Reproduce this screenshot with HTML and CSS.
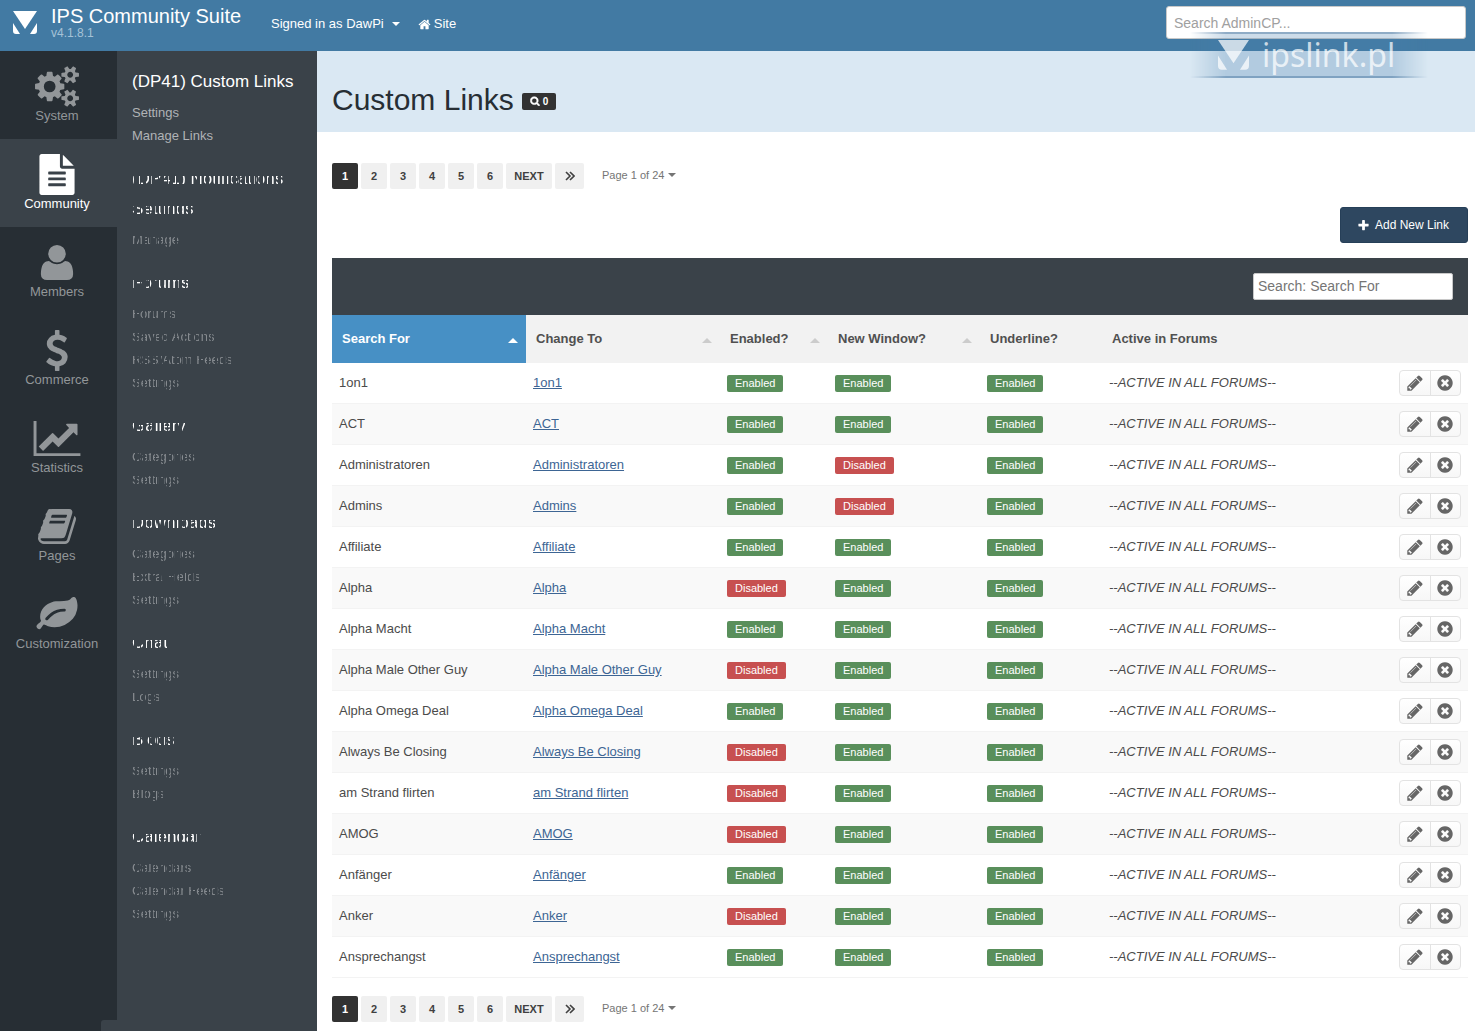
FILE: index.html
```html
<!DOCTYPE html>
<html lang="en">
<head>
<meta charset="utf-8">
<title>Custom Links - IPS Community Suite</title>
<link rel="stylesheet" href="styles.css">
</head>
<body>
<svg class="sprite" aria-hidden="true">
  <symbol id="cogs" viewBox="0 0 1920 1792"><path d="M896 896q0-106-75-181t-181-75-181 75-75 181 75 181 181 75 181-75 75-181zm768 512q0-52-38-90t-90-38-90 38-38 90q0 53 37.5 90.5t90.5 37.5 90.5-37.5 37.5-90.5zm0-1024q0-52-38-90t-90-38-90 38-38 90q0 53 37.5 90.5t90.5 37.5 90.5-37.5 37.5-90.5zm-384 421v185q0 10-7 19.5t-16 10.5l-155 24q-11 35-32 76 34 48 90 115 7 11 7 20 0 12-7 19-23 30-82.5 89.5t-78.5 59.5q-11 0-21-7l-115-90q-37 19-77 31-11 108-23 155-7 24-30 24h-186q-11 0-20-7.5t-10-17.5l-23-153q-34-10-75-31l-118 89q-7 7-20 7-11 0-21-8-144-133-144-160 0-9 7-19 10-14 41-53t47-61q-23-44-35-82l-152-24q-10-1-17-9.5t-7-19.5v-185q0-10 7-19.5t16-10.5l155-24q11-35 32-76-34-48-90-115-7-11-7-20 0-12 7-20 22-30 82-89t79-59q11 0 21 7l115 90q34-18 77-32 11-108 23-154 7-24 30-24h186q11 0 20 7.5t10 17.5l23 153q34 10 75 31l118-89q8-7 20-7 11 0 21 8 144 133 144 160 0 8-7 19-12 16-42 54t-45 60q23 48 34 82l152 23q10 2 17 10.5t7 19.5zm640 533v140q0 16-149 31-12 27-30 52 51 113 51 138 0 4-4 7-122 71-124 71-8 0-46-47t-52-68q-20 2-30 2t-30-2q-14 21-52 68t-46 47q-2 0-124-71-4-3-4-7 0-25 51-138-18-25-30-52-149-15-149-31v-140q0-16 149-31 13-29 30-52-51-113-51-138 0-4 4-7 4-2 35-20t59-34 30-16q8 0 46 46.5t52 67.5q20-2 30-2t30 2q51-71 92-112l6-2q4 0 124 70 4 3 4 7 0 25-51 138 17 23 30 52 149 15 149 31zm0-1024v140q0 16-149 31-12 27-30 52 51 113 51 138 0 4-4 7-122 71-124 71-8 0-46-47t-52-68q-20 2-30 2t-30-2q-14 21-52 68t-46 47q-2 0-124-71-4-3-4-7 0-25 51-138-18-25-30-52-149-15-149-31v-140q0-16 149-31 13-29 30-52-51-113-51-138 0-4 4-7 4-2 35-20t59-34 30-16q8 0 46 46.5t52 67.5q20-2 30-2t30 2q51-71 92-112l6-2q4 0 124 70 4 3 4 7 0 25-51 138 17 23 30 52 149 15 149 31z"/></symbol>
  <symbol id="file" viewBox="0 0 1792 1792"><path d="M1596 476q14 14 28 36h-472v-472q22 14 36 28zm-476 164h544v1056q0 40-28 68t-68 28h-1344q-40 0-68-28t-28-68v-1600q0-40 28-68t68-28h800v544q0 40 28 68t68 28zm160 736v-64q0-14-9-23t-23-9h-704q-14 0-23 9t-9 23v64q0 14 9 23t23 9h704q14 0 23-9t9-23zm0-256v-64q0-14-9-23t-23-9h-704q-14 0-23 9t-9 23v64q0 14 9 23t23 9h704q14 0 23-9t9-23zm0-256v-64q0-14-9-23t-23-9h-704q-14 0-23 9t-9 23v64q0 14 9 23t23 9h704q14 0 23-9t9-23z"/></symbol>
  <symbol id="user" viewBox="0 0 1408 1792"><path transform="translate(0 1536) scale(1 -1)" d="M1408 131q0-120-73-189.5t-194-69.5h-874q-121 0-194 69.5t-73 189.5q0 53 3.5 103.5t14 109t26.5 108.5t43 97.5t62 81t85.5 53.5t111.5 20q9 0 42-21.5t74.5-48t108-48t133.5-21.5t133.5 21.5t108 48t74.5 48t42 21.5q61 0 111.5-20t85.5-53.5t62-81t43-97.5t26.5-108.5t14-109t3.5-103.5zM1088 1024q0-159-112.5-271.5t-271.5-112.5t-271.5 112.5t-112.5 271.5t112.5 271.5t271.5 112.5t271.5-112.5t112.5-271.5z"/></symbol>
  <symbol id="dollar" viewBox="0 0 1024 1792"><path transform="translate(0 1536) scale(1 -1)" d="M978 351q0-153-99.5-263.5t-258.5-136.5v-175q0-14-9-23t-23-9h-135q-13 0-22.5 9.5t-9.5 22.5v175q-66 9-127.5 31t-101.5 44.5t-74 48t-46.5 37.5t-17.5 18q-17 21-2 41l103 135q7 10 23 12q15 2 24-9l2-2q113-99 243-125q37-8 74-8q81 0 142.5 43t61.5 122q0 28-15 53t-33.5 42t-58.5 37.5t-66 32t-80 32.5q-39 16-61.5 25t-61.5 26.5t-62.5 31t-56.5 35.5t-53.5 42.5t-43.5 49t-35.5 58t-21 66.5t-8.5 78q0 138 98 242t255 134v180q0 13 9.5 22.5t22.5 9.5h135q14 0 23-9t9-23v-176q57-6 110.5-23t87-33.5t63.5-37.5t39-29t15-14q17-18 5-38l-81-146q-8-15-23-16q-14-3-27 7q-3 3-14.5 12t-39 26.5t-58.5 32t-74.5 26t-85.5 11.5q-95 0-155-43t-60-111q0-26 8.5-48t29.5-41.5t39.5-33t56-31t60.5-27t70-27.5q53-20 81-31.5t76-35t75.5-42.5t62-50t53-63.5t31.5-76.5t13-94z"/></symbol>
  <symbol id="chart" viewBox="0 0 2048 1792"><path d="M2048 1536v128h-2048v-1536h128v1408h1920zm-128-1248v435q0 21-19.5 29.5t-35.5-7.5l-121-121-633 633q-10 10-23 10t-23-10l-233-233-416 416-192-192 585-585q10-10 23-10t23 10l233 233 464-464-121-121q-16-16-7.5-35.5t29.5-19.5h435q14 0 23 9t9 23z"/></symbol>
  <symbol id="book" viewBox="0 0 1792 1792"><path d="M1703 478q40 57 18 129l-275 906q-19 64-76.5 107.5t-122.5 43.5h-923q-77 0-148.5-53.5t-99.5-131.5q-24-67-2-127 0-4 3-27t4-37q1-8-3-21.5t-3-19.5q2-11 8-21t16.5-23.5 16.5-23.5q23-38 45-91.5t30-91.5q3-10 .5-30t-.5-28q3-11 17-28t17-23q21-36 42-92t25-90q1-9-2.5-32t.5-28q4-13 22-30.5t22-22.5q19-26 42.5-84.5t27.5-96.5q1-8-3-25.5t-2-26.5q2-8 9-18t18-23 17-21q8-12 16.5-30.5t15-35 16-36 19.5-32 26.5-23.5 36-11.5 47.5 5.5l-1 3q38-9 51-9h761q74 0 114 56t18 130l-274 906q-36 119-71.5 153.5t-128.5 34.5h-869q-27 0-38 15-11 16-1 43 24 70 144 70h923q29 0 56-15.5t35-41.5l300-987q7-22 5-57 38 15 59 43zm-1064 2q-4 13 2 22.5t20 9.5h608q13 0 25.5-9.5t16.5-22.5l21-64q4-13-2-22.5t-20-9.5h-608q-13 0-25.5 9.5t-16.5 22.5zm-83 256q-4 13 2 22.5t20 9.5h608q13 0 25.5-9.5t16.5-22.5l21-64q4-13-2-22.5t-20-9.5h-608q-13 0-25.5 9.5t-16.5 22.5z"/></symbol>
  <symbol id="leaf" viewBox="0 0 1792 1792"><path d="M1280 704q0-26-19-45t-45-19q-172 0-318 49.5t-259.5 134-235.5 219.5q-19 21-19 45 0 26 19 45t45 19q24 0 45-19 27-24 74-71t67-66q137-124 268.5-176t313.5-52q26 0 45-19t19-45zm512-198q0 95-20 193-46 224-184.5 383t-357.5 268q-214 108-438 108-148 0-286-47-15-5-88-42t-96-37q-16 0-39.5 32t-45 70-52.5 70-60 32q-43 0-63.5-17.5t-45.5-59.5q-2-4-6-11t-5.5-10-3-9.5-1.5-13.5q0-35 31-73.5t68-65.5 68-56 31-48q0-4-14-38t-16-44q-9-51-9-104 0-115 43.5-220t119-184.5 170.5-139 204-95.5q55-18 145-25.5t179.5-9 178.5-6 163.5-24 113.5-56.5l29.5-29.5 29.5-28 27-20 36.5-16 43.5-4.5q39 0 70.5 46t47.5 112 24 124 8 96z"/></symbol>
  <symbol id="home" viewBox="0 0 1792 1792"><path d="M1472 992v480q0 26-19 45t-45 19h-384v-384h-256v384h-384q-26 0-45-19t-19-45v-480q0-1 .5-3t.5-3l575-474 575 474q1 2 1 6zm223-69l-62 74q-8 9-21 11h-3q-13 0-21-7l-692-577-692 577q-12 8-24 7-13-2-21-11l-62-74q-8-10-7-23.5t11-21.5l719-599q32-26 76-26t76 26l244 204v-195q0-14 9-23t23-9h192q14 0 23 9t9 23v408l219 182q10 8 11 21.5t-7 23.5z"/></symbol>
  <symbol id="search" viewBox="0 0 1792 1792"><path d="M1216 832q0-185-131.5-316.5t-316.5-131.5-316.5 131.5-131.5 316.5 131.5 316.5 316.5 131.5 316.5-131.5 131.5-316.5zm512 832q0 52-38 90t-90 38q-54 0-90-38l-343-342q-179 124-399 124-143 0-273.5-55.5t-225-150-150-225-55.5-273.5 55.5-273.5 150-225 225-150 273.5-55.5 273.5 55.5 225 150 150 225 55.5 273.5q0 220-124 399l343 343q37 37 37 90z"/></symbol>
  <symbol id="plus" viewBox="0 0 1792 1792"><path d="M1600 736v192q0 40-28 68t-68 28h-416v416q0 40-28 68t-68 28h-192q-40 0-68-28t-28-68v-416h-416q-40 0-68-28t-28-68v-192q0-40 28-68t68-28h416v-416q0-40 28-68t68-28h192q40 0 68 28t28 68v416h416q40 0 68 28t28 68z"/></symbol>
  <symbol id="pencil" viewBox="0 0 1792 1792"><path d="M491 1536l91-91-235-235-91 91v107h128v128h107zm523-928q0-22-22-22-10 0-17 7l-542 542q-7 7-7 17 0 22 22 22 10 0 17-7l542-542q7-7 7-17zm-54-192l416 416-832 832h-416v-416zm683 96q0 53-37 90l-166 166-416-416 166-165q36-38 90-38 53 0 91 38l235 234q37 39 37 91z"/></symbol>
  <symbol id="remove" viewBox="0 0 1792 1792"><path d="M1277 1122q0-26-19-45l-181-181 181-181q19-19 19-45 0-27-19-46l-90-90q-19-19-46-19-26 0-45 19l-181 181-181-181q-19-19-45-19-27 0-46 19l-90 90q-19 19-19 46 0 26 19 45l181 181-181 181q-19 19-19 45 0 27 19 46l90 90q19 19 46 19 26 0 45-19l181-181 181 181q19 19 45 19 27 0 46-19l90-90q19-19 19-46zm387-226q0 209-103 385.5t-279.5 279.5-385.5 103-385.5-103-279.5-279.5-103-385.5 103-385.5 279.5-279.5 385.5-103 385.5 103 279.5 279.5 103 385.5z"/></symbol>
  <symbol id="last" viewBox="0 0 10 10"><path d="M1 1l4 4-4 4M5 1l4 4-4 4" fill="none" stroke="currentColor" stroke-width="1.6"/></symbol>
  <symbol id="logo" viewBox="0 0 24 24"><path d="M0 0h24L12 18z"/><path d="M0 12l7 11H3q-3 0-3-3zM24 12l-7 11h4q3 0 3-3z"/></symbol>
</svg>

<header class="topbar">
  <a class="brand" href="#">
    <svg class="brand-mark"><use href="#logo"/></svg>
    <span class="brand-text"><span class="brand-name">IPS Community Suite</span><span class="brand-version">v4.1.8.1</span></span>
  </a>
  <nav class="toplinks">
    <a href="#">Signed in as DawPi <i class="caret"></i></a>
    <a href="#"><svg class="home-icon"><use href="#home"/></svg>Site</a>
  </nav>
  <input class="global-search" type="search" aria-label="Search AdminCP" placeholder="Search AdminCP...">
  <div class="watermark"><svg class="watermark-mark"><use href="#logo"/></svg><span>ipslink.pl</span></div>
</header>

<div class="shell">
  <nav class="mainnav">
    <a href="#"><svg><use href="#cogs"/></svg>System</a>
    <a href="#" class="active"><svg><use href="#file"/></svg>Community</a>
    <a href="#"><svg><use href="#user"/></svg>Members</a>
    <a href="#"><svg><use href="#dollar"/></svg>Commerce</a>
    <a href="#"><svg><use href="#chart"/></svg>Statistics</a>
    <a href="#"><svg><use href="#book"/></svg>Pages</a>
    <a href="#"><svg><use href="#leaf"/></svg>Customization</a>
  </nav>

  <nav class="subnav">
    <section><h2>(DP41) Custom Links</h2><a href="#">Settings</a><a href="#">Manage Links</a></section>
    <section class="obscured"><h2>(DP41) Notifications Settings</h2><a href="#">Manage</a></section>
    <section class="obscured"><h2>Forums</h2><a href="#">Forums</a><a href="#">Saved Actions</a><a href="#">RSS/Atom Feeds</a><a href="#">Settings</a></section>
    <section class="obscured"><h2>Gallery</h2><a href="#">Categories</a><a href="#">Settings</a></section>
    <section class="obscured"><h2>Downloads</h2><a href="#">Categories</a><a href="#">Extra Fields</a><a href="#">Settings</a></section>
    <section class="obscured"><h2>Chat</h2><a href="#">Settings</a><a href="#">Logs</a></section>
    <section class="obscured"><h2>Blogs</h2><a href="#">Settings</a><a href="#">Blogs</a></section>
    <section class="obscured"><h2>Calendar</h2><a href="#">Calendars</a><a href="#">Calendar Feeds</a><a href="#">Settings</a></section>
    <div class="status-corner"></div>
  </nav>

  <main>
    <div class="page-header">
      <h1>Custom Links</h1>
      <button class="counter" type="button"><svg><use href="#search"/></svg>0</button>
    </div>
    <div class="content">
      <nav class="pager" aria-label="Pages, top">
        <a href="#" class="current">1</a><a href="#">2</a><a href="#">3</a><a href="#">4</a><a href="#">5</a><a href="#">6</a><a href="#" class="next">NEXT</a><a href="#" class="last" aria-label="Last page"><svg><use href="#last"/></svg></a>
        <button type="button">Page 1 of 24 <i class="caret"></i></button>
      </nav>
      <div class="page-actions"><button class="add" type="button"><svg><use href="#plus"/></svg>Add New Link</button></div>
      <div class="toolbar"><input type="search" aria-label="Search" placeholder="Search: Search For"></div>
      <table>
        <colgroup><col class="c-search"><col class="c-change"><col class="c-enabled"><col class="c-window"><col class="c-underline"><col><col class="c-tools"></colgroup>
        <thead><tr>
          <th class="sorted"><span>Search For<i class="sort"></i></span></th>
          <th><span>Change To<i class="sort"></i></span></th>
          <th><span>Enabled?<i class="sort"></i></span></th>
          <th><span>New Window?<i class="sort"></i></span></th>
          <th><span>Underline?</span></th>
          <th colspan="2"><span>Active in Forums</span></th>
        </tr></thead>
        <tbody>
          <tr><td>1on1</td><td><a href="#">1on1</a></td><td><b class="on">Enabled</b></td><td><b class="on">Enabled</b></td><td><b class="on">Enabled</b></td><td><em>--ACTIVE IN ALL FORUMS--</em></td><td><div class="tools"><button type="button" aria-label="Edit"><svg><use href="#pencil"/></svg></button><button type="button" aria-label="Delete"><svg><use href="#remove"/></svg></button></div></td></tr>
          <tr><td>ACT</td><td><a href="#">ACT</a></td><td><b class="on">Enabled</b></td><td><b class="on">Enabled</b></td><td><b class="on">Enabled</b></td><td><em>--ACTIVE IN ALL FORUMS--</em></td><td><div class="tools"><button type="button" aria-label="Edit"><svg><use href="#pencil"/></svg></button><button type="button" aria-label="Delete"><svg><use href="#remove"/></svg></button></div></td></tr>
          <tr><td>Administratoren</td><td><a href="#">Administratoren</a></td><td><b class="on">Enabled</b></td><td><b class="off">Disabled</b></td><td><b class="on">Enabled</b></td><td><em>--ACTIVE IN ALL FORUMS--</em></td><td><div class="tools"><button type="button" aria-label="Edit"><svg><use href="#pencil"/></svg></button><button type="button" aria-label="Delete"><svg><use href="#remove"/></svg></button></div></td></tr>
          <tr><td>Admins</td><td><a href="#">Admins</a></td><td><b class="on">Enabled</b></td><td><b class="off">Disabled</b></td><td><b class="on">Enabled</b></td><td><em>--ACTIVE IN ALL FORUMS--</em></td><td><div class="tools"><button type="button" aria-label="Edit"><svg><use href="#pencil"/></svg></button><button type="button" aria-label="Delete"><svg><use href="#remove"/></svg></button></div></td></tr>
          <tr><td>Affiliate</td><td><a href="#">Affiliate</a></td><td><b class="on">Enabled</b></td><td><b class="on">Enabled</b></td><td><b class="on">Enabled</b></td><td><em>--ACTIVE IN ALL FORUMS--</em></td><td><div class="tools"><button type="button" aria-label="Edit"><svg><use href="#pencil"/></svg></button><button type="button" aria-label="Delete"><svg><use href="#remove"/></svg></button></div></td></tr>
          <tr><td>Alpha</td><td><a href="#">Alpha</a></td><td><b class="off">Disabled</b></td><td><b class="on">Enabled</b></td><td><b class="on">Enabled</b></td><td><em>--ACTIVE IN ALL FORUMS--</em></td><td><div class="tools"><button type="button" aria-label="Edit"><svg><use href="#pencil"/></svg></button><button type="button" aria-label="Delete"><svg><use href="#remove"/></svg></button></div></td></tr>
          <tr><td>Alpha Macht</td><td><a href="#">Alpha Macht</a></td><td><b class="on">Enabled</b></td><td><b class="on">Enabled</b></td><td><b class="on">Enabled</b></td><td><em>--ACTIVE IN ALL FORUMS--</em></td><td><div class="tools"><button type="button" aria-label="Edit"><svg><use href="#pencil"/></svg></button><button type="button" aria-label="Delete"><svg><use href="#remove"/></svg></button></div></td></tr>
          <tr><td>Alpha Male Other Guy</td><td><a href="#">Alpha Male Other Guy</a></td><td><b class="off">Disabled</b></td><td><b class="on">Enabled</b></td><td><b class="on">Enabled</b></td><td><em>--ACTIVE IN ALL FORUMS--</em></td><td><div class="tools"><button type="button" aria-label="Edit"><svg><use href="#pencil"/></svg></button><button type="button" aria-label="Delete"><svg><use href="#remove"/></svg></button></div></td></tr>
          <tr><td>Alpha Omega Deal</td><td><a href="#">Alpha Omega Deal</a></td><td><b class="on">Enabled</b></td><td><b class="on">Enabled</b></td><td><b class="on">Enabled</b></td><td><em>--ACTIVE IN ALL FORUMS--</em></td><td><div class="tools"><button type="button" aria-label="Edit"><svg><use href="#pencil"/></svg></button><button type="button" aria-label="Delete"><svg><use href="#remove"/></svg></button></div></td></tr>
          <tr><td>Always Be Closing</td><td><a href="#">Always Be Closing</a></td><td><b class="off">Disabled</b></td><td><b class="on">Enabled</b></td><td><b class="on">Enabled</b></td><td><em>--ACTIVE IN ALL FORUMS--</em></td><td><div class="tools"><button type="button" aria-label="Edit"><svg><use href="#pencil"/></svg></button><button type="button" aria-label="Delete"><svg><use href="#remove"/></svg></button></div></td></tr>
          <tr><td>am Strand flirten</td><td><a href="#">am Strand flirten</a></td><td><b class="off">Disabled</b></td><td><b class="on">Enabled</b></td><td><b class="on">Enabled</b></td><td><em>--ACTIVE IN ALL FORUMS--</em></td><td><div class="tools"><button type="button" aria-label="Edit"><svg><use href="#pencil"/></svg></button><button type="button" aria-label="Delete"><svg><use href="#remove"/></svg></button></div></td></tr>
          <tr><td>AMOG</td><td><a href="#">AMOG</a></td><td><b class="off">Disabled</b></td><td><b class="on">Enabled</b></td><td><b class="on">Enabled</b></td><td><em>--ACTIVE IN ALL FORUMS--</em></td><td><div class="tools"><button type="button" aria-label="Edit"><svg><use href="#pencil"/></svg></button><button type="button" aria-label="Delete"><svg><use href="#remove"/></svg></button></div></td></tr>
          <tr><td>Anfänger</td><td><a href="#">Anfänger</a></td><td><b class="on">Enabled</b></td><td><b class="on">Enabled</b></td><td><b class="on">Enabled</b></td><td><em>--ACTIVE IN ALL FORUMS--</em></td><td><div class="tools"><button type="button" aria-label="Edit"><svg><use href="#pencil"/></svg></button><button type="button" aria-label="Delete"><svg><use href="#remove"/></svg></button></div></td></tr>
          <tr><td>Anker</td><td><a href="#">Anker</a></td><td><b class="off">Disabled</b></td><td><b class="on">Enabled</b></td><td><b class="on">Enabled</b></td><td><em>--ACTIVE IN ALL FORUMS--</em></td><td><div class="tools"><button type="button" aria-label="Edit"><svg><use href="#pencil"/></svg></button><button type="button" aria-label="Delete"><svg><use href="#remove"/></svg></button></div></td></tr>
          <tr><td>Ansprechangst</td><td><a href="#">Ansprechangst</a></td><td><b class="on">Enabled</b></td><td><b class="on">Enabled</b></td><td><b class="on">Enabled</b></td><td><em>--ACTIVE IN ALL FORUMS--</em></td><td><div class="tools"><button type="button" aria-label="Edit"><svg><use href="#pencil"/></svg></button><button type="button" aria-label="Delete"><svg><use href="#remove"/></svg></button></div></td></tr>
        </tbody>
      </table>
      <nav class="pager pager-bottom" aria-label="Pages, bottom">
        <a href="#" class="current">1</a><a href="#">2</a><a href="#">3</a><a href="#">4</a><a href="#">5</a><a href="#">6</a><a href="#" class="next">NEXT</a><a href="#" class="last" aria-label="Last page"><svg><use href="#last"/></svg></a>
        <button type="button">Page 1 of 24 <i class="caret"></i></button>
      </nav>
    </div>
  </main>
</div>
</body>
</html>
```
FILE: styles.css
```css
* { box-sizing: border-box; }
body {
  margin: 0;
  min-height: 100vh;
  display: flex;
  flex-direction: column;
  font: 13px/18px "Liberation Sans", Arial, sans-serif;
  color: #4b4b4b;
  background: #fff;
}
a { color: inherit; text-decoration: none; }
button, input { font-family: inherit; margin: 0; }
h1, h2 { margin: 0; font-weight: normal; }
svg { fill: currentColor; display: block; flex: none; }
.sprite { position: absolute; width: 0; height: 0; }

.caret {
  display: inline-block;
  border: 4px solid transparent;
  border-top-color: currentColor;
  border-bottom: 0;
}

/* top bar */
.topbar {
  position: relative;
  display: flex;
  align-items: flex-start;
  height: 51px;
  padding: 0 9px 0 13px;
  background: #427aa3;
  color: #fff;
}
.brand { display: flex; gap: 14px; width: 258px; }
.brand-mark { width: 24px; height: 24px; margin-top: 11px; }
.brand-text { display: flex; flex-direction: column; padding-top: 5px; }
.brand-name { font-size: 20px; line-height: 22px; white-space: nowrap; }
.brand-version { font-size: 12px; line-height: 12px; color: #a5c2d7; }
.toplinks { display: flex; gap: 18px; padding-top: 15px; }
.toplinks a { display: flex; align-items: center; gap: 8px; }
.toplinks a + a { gap: 3px; }
.home-icon { width: 13px; height: 13px; }
.global-search {
  width: 300px;
  height: 33px;
  margin: 6px 0 0 auto;
  padding: 0 7px;
  border: 1px solid #c8c8c8;
  border-radius: 3px;
  background: #fff;
  font-size: 14px;
}
.global-search::placeholder { color: #a0a0a0; }

/* site stamp laid over the corner of the page */
.watermark {
  position: absolute;
  z-index: 1;
  top: 32px;
  right: 47px;
  width: 238px;
  height: 46px;
  display: flex;
  align-items: center;
  gap: 13px;
  padding-left: 28px;
  font: 32px/44px "Noto Sans", sans-serif;
  color: rgba(255, 255, 255, .72);
  pointer-events: none;
}
.watermark::before {
  content: "";
  position: absolute;
  z-index: -1;
  inset: 0;
  border: solid rgba(50, 100, 145, .4);
  border-width: 2px 0;
  background: rgba(75, 130, 175, .28);
  mask-image: linear-gradient(90deg, transparent, #000 15%, #000 85%, transparent);
}
.watermark-mark { width: 31px; height: 31px; }

/* columns */
.shell { display: flex; flex: 1; }
.mainnav { width: 117px; flex: none; background: #272e34; }
.mainnav a {
  display: flex;
  flex-direction: column;
  align-items: center;
  height: 88px;
  padding: 15px 3px 0 0;
  color: #929699;
}
.mainnav svg { width: 48px; height: 41px; }
.mainnav .active { background: #3a4249; color: #fff; }

.subnav {
  position: relative;
  display: flex;
  flex-direction: column;
  gap: 17px;
  width: 200px;
  flex: none;
  padding: 16px 15px 0;
  background: #3a4249;
  color: #b0b3b6;
}
.subnav h2 { margin-bottom: 4px; font-size: 17px; line-height: 30px; color: #fff; }
.subnav a { display: block; line-height: 23px; }

/* entries whose names are partly wiped out */
.obscured h2, .obscured a {
  mask-image:
    repeating-linear-gradient(90deg, #000 0 2px, transparent 2px 5px, #000 5px 8px, transparent 8px 9px),
    repeating-linear-gradient(transparent 0 12px, #000 12px 20px, transparent 20px 30px);
  mask-composite: intersect;
}
.obscured a {
  opacity: .65;
  mask-image:
    repeating-linear-gradient(90deg, #000 0 3px, transparent 3px 5px, #000 5px 7px, transparent 7px 8px),
    linear-gradient(transparent 8px, #000 8px);
}
.status-corner {
  position: absolute;
  left: -16px;
  bottom: 0;
  width: 16px;
  height: 11px;
  border-top-left-radius: 3px;
  background: #3a4249;
}

main { flex: 1; min-width: 0; }
.page-header {
  display: flex;
  align-items: center;
  gap: 8px;
  height: 81px;
  padding: 16px 15px 0;
  background: #dae8f3;
}
h1 { font-size: 30px; line-height: 40px; color: #272e34; }
.counter {
  display: flex;
  align-items: center;
  gap: 3px;
  height: 17px;
  margin-top: 3px;
  padding: 0 8px;
  border: 0;
  border-radius: 2px;
  background: #323232;
  color: #fff;
  font-size: 10px;
  font-weight: bold;
}
.counter svg { width: 10px; height: 10px; stroke: currentColor; stroke-width: 100; }

.content { padding: 31px 7px 9px 15px; }
.pager { display: flex; gap: 3px; font-size: 11px; }
.pager a {
  display: flex;
  align-items: center;
  justify-content: center;
  width: 26px;
  height: 26px;
  border-radius: 2px;
  background: #f0f0f0;
  color: #404040;
  font-weight: bold;
}
.pager .current { background: #323232; color: #fff; }
.pager .next { width: 46px; }
.pager .last { width: 29px; }
.pager svg { width: 10px; height: 10px; }
.pager button {
  display: flex;
  align-items: center;
  gap: 4px;
  padding: 0 15px 2px;
  border: 0;
  background: none;
  color: #757575;
  font-size: 11px;
}
.pager-bottom { margin-top: 18px; }

.page-actions { display: flex; justify-content: flex-end; padding: 18px 0 15px; }
.add {
  display: flex;
  align-items: center;
  gap: 5px;
  height: 36px;
  padding: 0 18px 0 16px;
  border: 1px solid #263f58;
  border-radius: 3px;
  background: #2e4760;
  color: #fff;
  font-size: 12px;
}
.add svg { width: 13px; height: 13px; }

.toolbar { display: flex; justify-content: flex-end; padding: 15px; background: #3a4249; }
.toolbar input {
  width: 200px;
  height: 27px;
  padding: 0 4px 1px;
  border: 1px solid #c8c8c8;
  border-radius: 2px;
  background: #fff;
  font-size: 14px;
}
.toolbar input::placeholder { color: #757575; }

table { width: 100%; table-layout: fixed; border-collapse: separate; border-spacing: 0; }
.c-search, .c-change { width: 194px; }
.c-enabled { width: 108px; }
.c-window { width: 152px; }
.c-underline { width: 122px; }
.c-tools { width: 76px; }
th { height: 48px; padding: 0 8px 0 10px; background: #f2f2f2; text-align: left; color: #505050; }
th span { display: flex; align-items: center; justify-content: space-between; }
.sort { margin-top: 2px; border: 5px solid transparent; border-bottom-color: #ccc; border-top: 0; }
.sorted { background: #4790c5; color: #fff; }
.sorted .sort { border-bottom-color: #fff; }
td { height: 41px; padding: 0 7px; border-bottom: 1px solid #f3f3f3; }
tbody tr:nth-child(even) { background: #f9f9f9; }
td a { color: #3d6594; text-decoration: underline; }
td b {
  display: inline-block;
  padding: 0 8px;
  border-radius: 2px;
  color: #fff;
  font-size: 11px;
  font-weight: normal;
  line-height: 17px;
  vertical-align: middle;
}
.on { background: #598f5b; }
.off { background: #c75050; }
.tools {
  display: flex;
  height: 26px;
  border: 1px solid #e3e3e3;
  border-radius: 4px;
  background: linear-gradient(#fff, #f7f7f7);
}
.tools button {
  flex: 1;
  display: flex;
  align-items: center;
  justify-content: center;
  padding: 0;
  border: 0;
  background: none;
  color: #666;
}
.tools button + button { border-left: 1px solid #e3e3e3; }
.tools svg { width: 18px; height: 18px; }
```
